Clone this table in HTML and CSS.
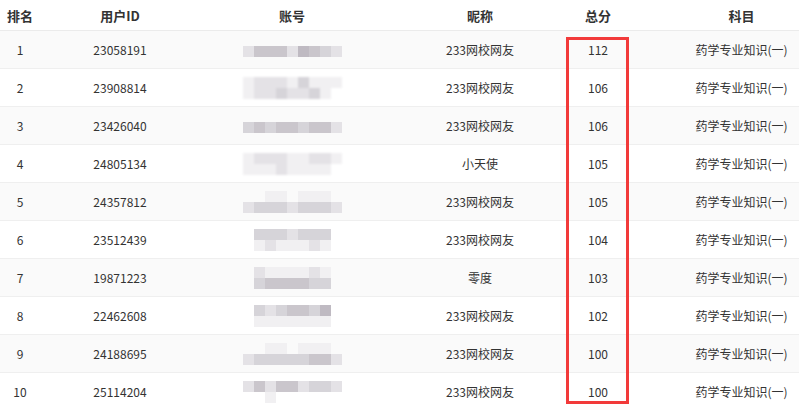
FILE: index.html
```html
<!DOCTYPE html>
<html lang="zh-CN">
<head>
    <meta charset="utf-8">
    <title>成绩排行</title>
    <link rel="stylesheet" href="styles.css">
</head>
<body>
    <div class="rank-wrap">
        <div class="row head">
            <div>排名</div><div>用户ID</div><div>账号</div><div>昵称</div><div>总分</div><div class="subj">科目</div>
        </div>

        <div class="row odd">
            <div>1</div><div>23058191</div>
            <div><div class="blur"><p><i class="b2"></i><i class="b4"></i><i class="b4"></i><i class="b4"></i><i class="b2"></i><i class="b5"></i><i class="b4"></i><i class="b3"></i><i class="b2"></i></p></div></div>
            <div>233网校网友</div><div>112</div><div class="subj">药学专业知识(一)</div>
        </div>
        <div class="row">
            <div>2</div><div>23908814</div>
            <div><div class="blur soft"><p><i class="b1"></i><i class="b2"></i><i class="b2"></i><i class="b2"></i><i class="b1"></i><i class="b3"></i><i class="b1"></i><i class="b1"></i><i class="b1"></i></p><p><i class="b1"></i><i class="b2"></i><i class="b2"></i><i class="b3"></i><i class="b2"></i><i class="b2"></i><i class="b3"></i><i class="b1"></i><i></i></p></div></div>
            <div>233网校网友</div><div>106</div><div class="subj">药学专业知识(一)</div>
        </div>
        <div class="row odd">
            <div>3</div><div>23426040</div>
            <div><div class="blur"><p><i class="b3"></i><i class="b4"></i><i class="b3"></i><i class="b4"></i><i class="b4"></i><i class="b3"></i><i class="b4"></i><i class="b4"></i><i class="b2"></i></p></div></div>
            <div>233网校网友</div><div>106</div><div class="subj">药学专业知识(一)</div>
        </div>
        <div class="row">
            <div>4</div><div>24805134</div>
            <div><div class="blur soft"><p><i class="b1"></i><i class="b2"></i><i class="b2"></i><i class="b2"></i><i class="b1"></i><i class="b1"></i><i class="b2"></i><i class="b2"></i><i class="b1"></i></p><p><i class="b1"></i><i class="b1"></i><i class="b1"></i><i class="b2"></i><i class="b1"></i><i class="b1"></i><i class="b1"></i><i class="b1"></i><i></i></p></div></div>
            <div>小天使</div><div>105</div><div class="subj">药学专业知识(一)</div>
        </div>
        <div class="row odd">
            <div>5</div><div>24357812</div>
            <div><div class="blur"><p><i></i><i></i><i class="b1"></i><i class="b1"></i><i></i><i class="b1"></i><i class="b1"></i><i class="b1"></i><i></i></p><p><i class="b2"></i><i class="b3"></i><i class="b3"></i><i class="b3"></i><i class="b2"></i><i class="b3"></i><i class="b3"></i><i class="b3"></i><i class="b2"></i></p></div></div>
            <div>233网校网友</div><div>105</div><div class="subj">药学专业知识(一)</div>
        </div>
        <div class="row">
            <div>6</div><div>23512439</div>
            <div><div class="blur"><p><i class="b3"></i><i class="b3"></i><i class="b3"></i><i class="b2"></i><i class="b3"></i><i class="b3"></i><i class="b3"></i></p><p><i class="b1"></i><i class="b2"></i><i class="b1"></i><i class="b1"></i><i class="b1"></i><i class="b2"></i><i class="b1"></i></p></div></div>
            <div>233网校网友</div><div>104</div><div class="subj">药学专业知识(一)</div>
        </div>
        <div class="row odd">
            <div>7</div><div>19871223</div>
            <div><div class="blur"><p><i class="b2"></i><i class="b1"></i><i class="b1"></i><i class="b1"></i><i class="b1"></i><i class="b2"></i><i class="b1"></i></p><p><i class="b3"></i><i class="b4"></i><i class="b4"></i><i class="b4"></i><i class="b4"></i><i class="b3"></i><i class="b3"></i></p></div></div>
            <div>零度</div><div>103</div><div class="subj">药学专业知识(一)</div>
        </div>
        <div class="row">
            <div>8</div><div>22462608</div>
            <div><div class="blur"><p><i class="b3"></i><i class="b2"></i><i class="b3"></i><i class="b4"></i><i class="b4"></i><i class="b3"></i><i class="b5"></i></p><p><i class="b1"></i><i class="b1"></i><i class="b1"></i><i class="b1"></i><i class="b1"></i><i class="b1"></i><i class="b1"></i></p></div></div>
            <div>233网校网友</div><div>102</div><div class="subj">药学专业知识(一)</div>
        </div>
        <div class="row odd">
            <div>9</div><div>24188695</div>
            <div><div class="blur"><p><i></i><i></i><i class="b1"></i><i class="b1"></i><i></i><i class="b1"></i><i class="b1"></i><i class="b1"></i><i></i></p><p><i class="b2"></i><i class="b3"></i><i class="b3"></i><i class="b3"></i><i class="b3"></i><i class="b3"></i><i class="b4"></i><i class="b4"></i><i class="b2"></i></p></div></div>
            <div>233网校网友</div><div>100</div><div class="subj">药学专业知识(一)</div>
        </div>
        <div class="row">
            <div>10</div><div>25114204</div>
            <div><div class="blur"><p><i class="b2"></i><i class="b4"></i><i class="b2"></i><i class="b4"></i><i class="b4"></i><i class="b2"></i><i class="b3"></i><i class="b3"></i><i class="b2"></i></p><p><i></i><i></i><i class="b1"></i><i></i><i></i><i></i><i></i><i></i><i></i></p></div></div>
            <div>233网校网友</div><div>100</div><div class="subj">药学专业知识(一)</div>
        </div>

        <div class="score-mark"></div>
    </div>
</body>
</html>
```

FILE: styles.css
```css
/* page */
body {
    margin: 0;
    background: #fff;
    overflow: hidden;
    font-family: "Noto Sans CJK SC", "Liberation Sans", sans-serif;
    font-size: 12px;
    color: #333;
}

.rank-wrap { position: relative; width: 799px; }

/* rows */
.row {
    display: grid;
    grid-template-columns: 40px 160px 184px 192px 44px 179px;
    height: 37px;
    border-bottom: 1px solid #efefef;
    align-items: center;
    text-align: center;
}
.row.odd { background: #fafafa; }
.row.head { height: 30px; font-weight: bold; font-size: 13px; color: #333; border-bottom-color: #ebebeb; }
.row .subj { padding-left: 64px; white-space: nowrap; }

/* blurred account */
.blur { display: inline-flex; flex-direction: column; vertical-align: middle; }
.blur p { display: flex; margin: 0; }
.blur i { display: block; width: 11px; height: 11px; }
.blur.soft { filter: blur(1px); }
.b1 { background: #f1f0f2; }
.b2 { background: #e4e2e6; }
.b3 { background: #d6d4d9; }
.b4 { background: #cac6cc; }
.b5 { background: #bfbac2; }

/* highlight on score column */
.score-mark {
    position: absolute;
    left: 566px;
    top: 37px;
    width: 57px;
    height: 361px;
    border: 3px solid #f23a3a;
}
```
